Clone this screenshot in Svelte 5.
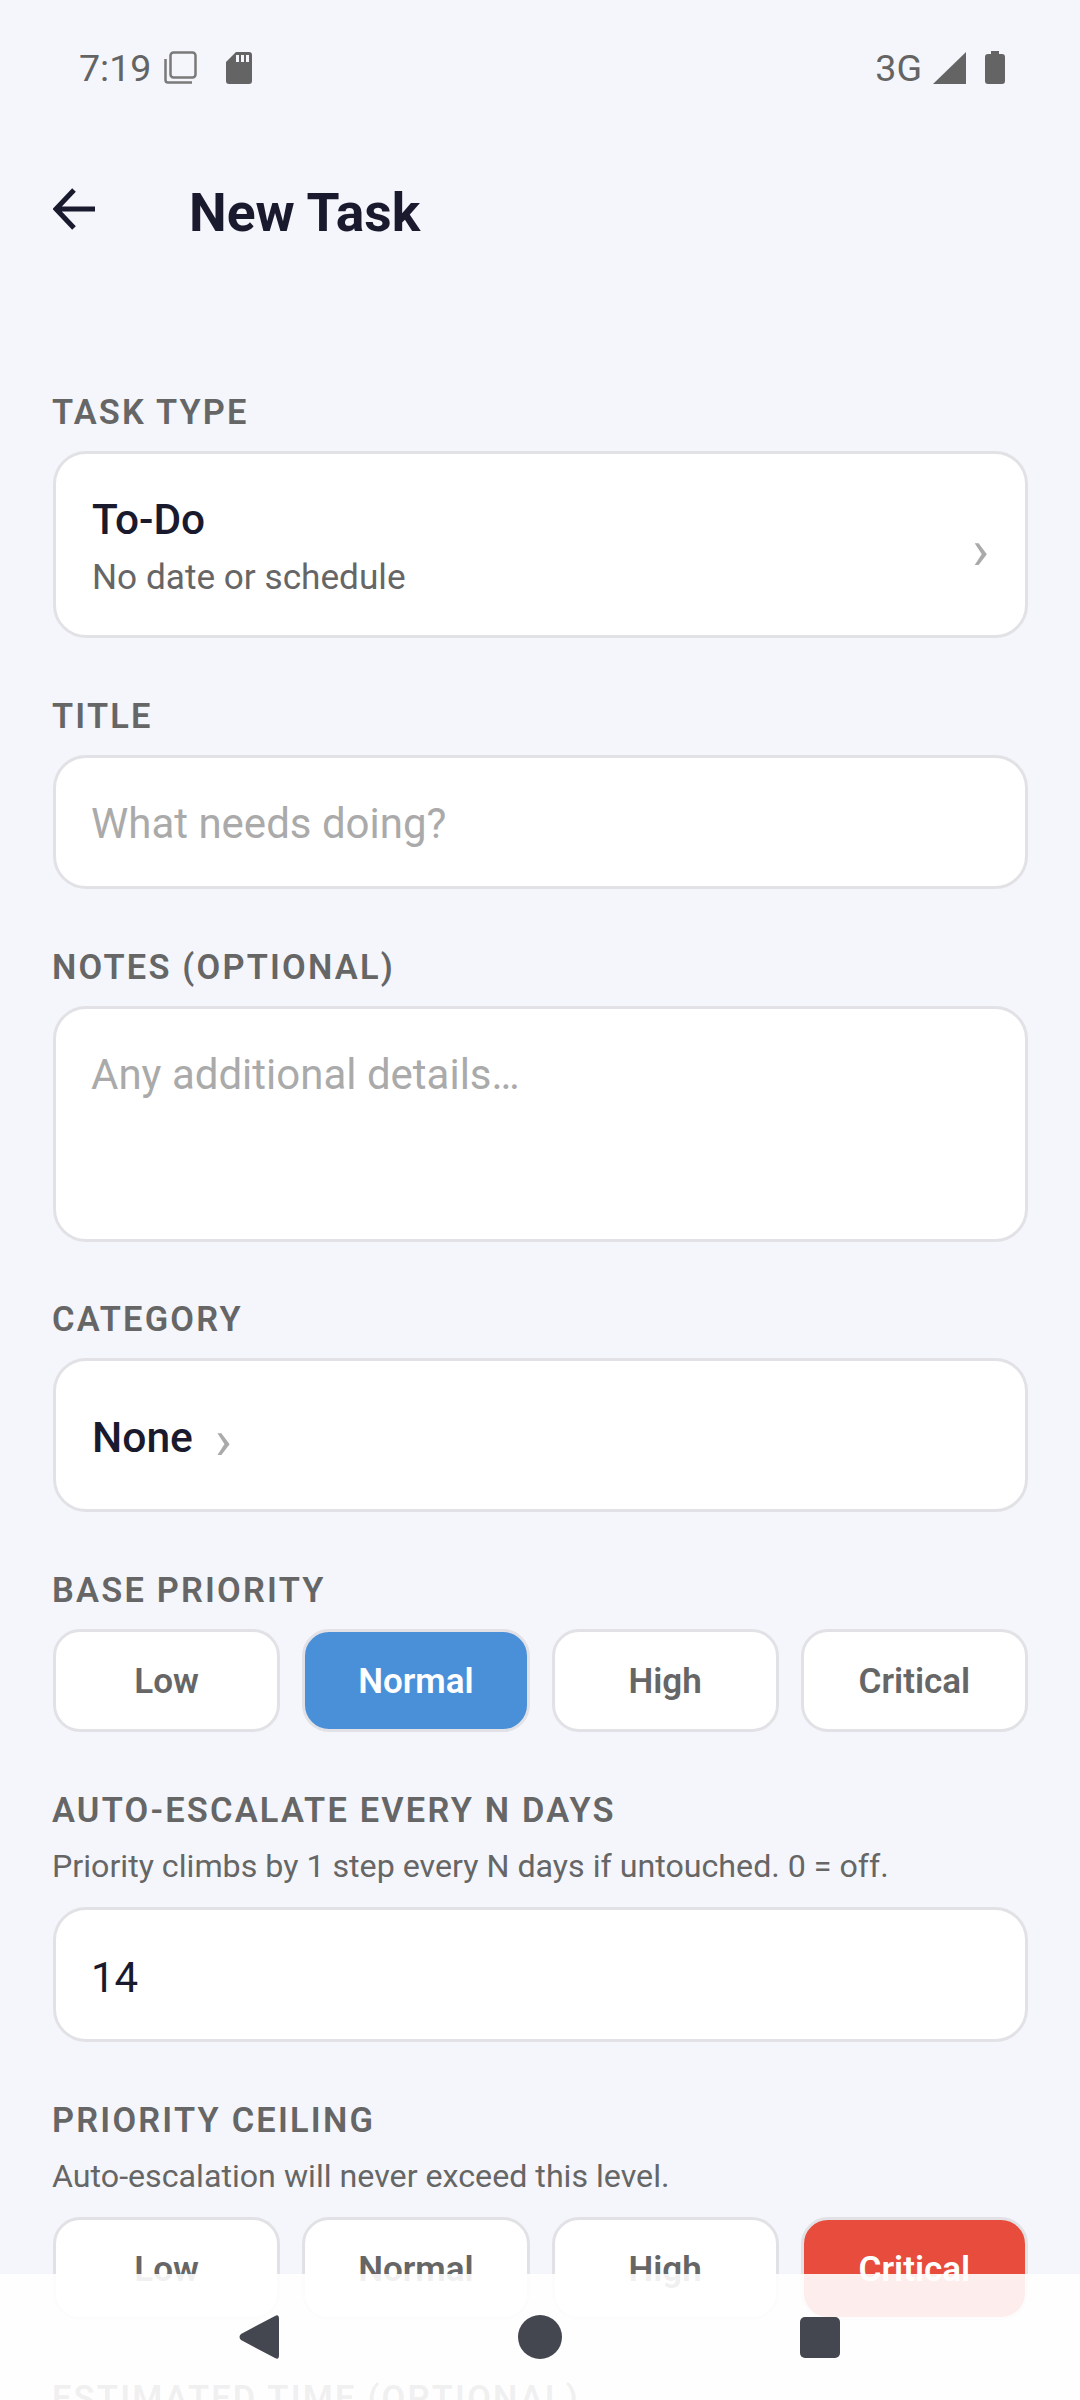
<script>
  const levels = ['Low', 'Normal', 'High', 'Critical'];
  let title = $state('');
  let notes = $state('');
  let escalateDays = $state('14');
  let basePriority = $state('Normal');
  let ceiling = $state('Critical');
</script>

<div class="screen">
  <div class="status">
    <div class="status-side">
      <span class="clock">7:19</span>
      <svg class="ic-copy" width="33" height="33" viewBox="0 0 33 33" fill="none" stroke="#7a7a7a" stroke-width="2.500">
        <rect x="6.500" y="1.500" width="25" height="25" rx="3" />
        <path d="M1.500 8v21q0 2.500 2.500 2.500h24" />
      </svg>
      <svg class="ic-sd" width="26" height="32" viewBox="0 0 26 32">
        <path d="M10 0h13q3 0 3 3v26q0 3-3 3H3q-3 0-3-3V10z" fill="#646464" />
        <path d="M10 3h3v7h-3zM15 3h3v7h-3zM20 3h3v7h-3z" fill="#f4f6fb" />
      </svg>
    </div>
    <div class="status-side">
      <span class="net">3G</span>
      <svg class="ic-signal" width="33" height="32" viewBox="0 0 33 32"><path d="M33 0v32H0z" fill="#646464" /></svg>
      <svg class="ic-batt" width="20" height="33" viewBox="0 0 20 33">
        <path d="M6 0h8v3h3q3 0 3 3v24q0 3-3 3H3q-3 0-3-3V6q0-3 3-3h3z" fill="#646464" />
      </svg>
    </div>
  </div>

  <header class="top">
    <svg class="back" width="42" height="42" viewBox="0 0 42 42" fill="none" stroke="#1a1a2e" stroke-width="5">
      <path d="M42 21H4M21 2 3 21l18 19" />
    </svg>
    <h1>New Task</h1>
  </header>

  <main class="form">
    <section class="field">
      <div class="label">TASK TYPE</div>
      <button class="card type-card">
        <span class="type-text">
          <span class="type-name">To-Do</span>
          <span class="type-sub">No date or schedule</span>
        </span>
        <span class="chev">›</span>
      </button>
    </section>

    <section class="field">
      <div class="label">TITLE</div>
      <input class="card input" placeholder="What needs doing?" bind:value={title} />
    </section>

    <section class="field">
      <div class="label">NOTES (OPTIONAL)</div>
      <textarea class="card input notes" placeholder="Any additional details…" bind:value={notes}></textarea>
    </section>

    <section class="field">
      <div class="label">CATEGORY</div>
      <button class="card cat-card">
        <span class="cat-name">None</span>
        <span class="chev">›</span>
      </button>
    </section>

    <section class="field">
      <div class="label">BASE PRIORITY</div>
      <div class="levels">
        {#each levels as l}
          <button class="level" class:on-blue={basePriority === l} onclick={() => (basePriority = l)}>{l}</button>
        {/each}
      </div>
    </section>

    <section class="field">
      <div class="label with-hint">AUTO-ESCALATE EVERY N DAYS</div>
      <div class="hint">Priority climbs by 1 step every N days if untouched. 0 = off.</div>
      <input class="card input days" inputmode="numeric" bind:value={escalateDays} />
    </section>

    <section class="field">
      <div class="label with-hint">PRIORITY CEILING</div>
      <div class="hint">Auto-escalation will never exceed this level.</div>
      <div class="levels">
        {#each levels as l}
          <button class="level" class:on-red={ceiling === l} onclick={() => (ceiling = l)}>{l}</button>
        {/each}
      </div>
    </section>

    <section class="field">
      <div class="label">ESTIMATED TIME (OPTIONAL)</div>
    </section>
  </main>

  <nav class="navbar">
    <svg width="40" height="44" viewBox="0 0 40 44"><path d="M36 1q4-2.500 4 3v36q0 5.500-4 3L2 25q-3-3 0-6z" fill="#444650" /></svg>
    <svg width="44" height="44" viewBox="0 0 44 44"><circle cx="22" cy="22" r="22" fill="#444650" /></svg>
    <svg class="nav-square" width="40" height="41" viewBox="0 0 40 41"><rect width="40" height="41" rx="5" fill="#444650" /></svg>
  </nav>
</div>

<style>
  :global(body) {
    margin: 0;
    background: #f4f6fb;
  }
  .screen {
    position: relative;
    height: 2400px;
    overflow: hidden;
    background: #f4f6fb;
    font-family: Roboto, sans-serif;
  }
  .status {
    height: 135px;
    padding: 0 75px 0 79px;
    display: flex;
    align-items: center;
    justify-content: space-between;
    box-sizing: border-box;
  }
  .status-side {
    display: flex;
    align-items: center;
  }
  .clock, .net {
    font-size: 37.600px;
    color: #646464;
  }
  .ic-copy { margin-left: 13px; }
  .ic-sd { margin-left: 29px; }
  .ic-signal { margin-left: 11px; }
  .ic-batt { margin-left: 19px; }
  .top {
    height: 148px;
    padding-left: 53px;
    display: flex;
    align-items: center;
  }
  .back { flex: none; }
  h1 {
    margin: 6px 0 0 94px;
    font-size: 53.400px;
    font-weight: 700;
    color: #1a1a2e;
  }
  .form {
    padding: 109px 52px 0 53px;
  }
  .field {
    margin-bottom: 57.800px;
  }
  .label {
    height: 39px;
    line-height: 41px;
    margin-bottom: 20px;
    margin-left: -1px;
    font-size: 34.400px;
    font-weight: 600;
    letter-spacing: 2.200px;
    color: #666;
    white-space: nowrap;
  }
  .label.with-hint {
    margin-bottom: 17px;
  }
  .hint {
    font-size: 32.200px;
    line-height: 40px;
    margin-bottom: 21px;
    margin-left: -1px;
    color: #666;
  }
  .card {
    display: flex;
    width: 100%;
    box-sizing: border-box;
    background: #fff;
    border: 3px solid #e2e2e6;
    border-radius: 33px;
    padding: 0 36px;
    font-family: inherit;
    text-align: left;
  }
  .type-card {
    height: 187px;
    align-items: center;
    justify-content: space-between;
  }
  .type-text {
    display: flex;
    flex-direction: column;
    padding-top: 3px;
  }
  .type-name {
    font-size: 42.400px;
    line-height: 52px;
    font-weight: 500;
    color: #1a1a2e;
  }
  .type-sub {
    margin-top: 9px;
    font-size: 35.200px;
    line-height: 44px;
    color: #666;
  }
  .chev {
    font-size: 56px;
    line-height: 56px;
    margin-top: 10px;
    color: #aaa;
  }
  .input {
    height: 134px;
    padding: 4px 35px 0;
    font-size: 42px;
    color: #1a1a2e;
    outline: none;
  }
  .input::placeholder {
    color: #aaa;
    opacity: 1;
  }
  .input.days {
    height: 135px;
    padding-top: 6px;
  }
  .notes {
    height: 236px;
    padding-top: 40.500px;
    resize: none;
    line-height: 52px;
  }
  .cat-card {
    height: 154px;
    align-items: center;
    gap: 22px;
  }
  .cat-name {
    padding-top: 3px;
    font-size: 42.600px;
    font-weight: 500;
    color: #1a1a2e;
  }
  .levels {
    display: grid;
    grid-template-columns: repeat(4, 1fr);
    gap: 22px;
  }
  .level {
    height: 103px;
    box-sizing: border-box;
    background: #fff;
    border: 3px solid #e2e2e6;
    border-radius: 27px;
    font-family: inherit;
    font-size: 35px;
    font-weight: 600;
    color: #666;
    padding: 2px 0 0;
  }
  .level.on-blue {
    background: #4a90d9;
    color: #fff;
  }
  .level.on-red {
    background: #e74c3c;
    color: #fff;
  }
  .navbar {
    position: absolute;
    left: 0;
    right: 0;
    bottom: 0;
    height: 126px;
    background: rgba(255, 255, 255, 0.9);
    box-sizing: border-box;
    padding: 41px 240px 0 239px;
    display: flex;
    justify-content: space-between;
    align-items: flex-start;
  }
  .nav-square {
    margin-top: 2px;
  }
</style>
